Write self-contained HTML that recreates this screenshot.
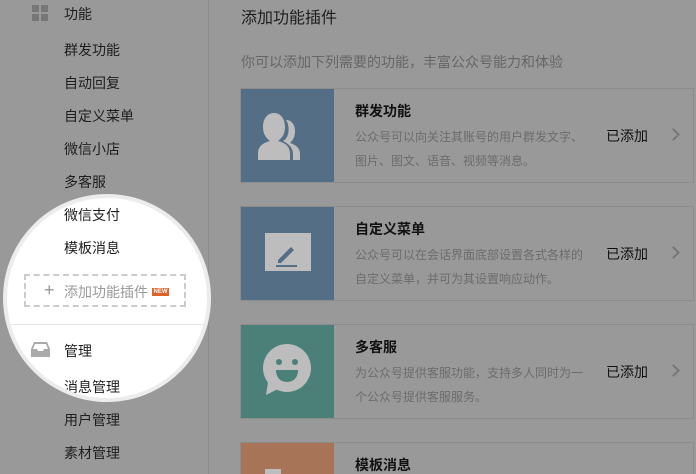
<!DOCTYPE html>
<html><head><meta charset="utf-8"><style>
*{margin:0;padding:0;box-sizing:border-box}
html{width:696px;height:474px;overflow:hidden}
body{width:696px;height:474px;overflow:hidden;background:#999;font-family:"Liberation Sans","Noto Sans CJK SC",sans-serif;position:relative;color:#1e1e1e}
.side{position:absolute;left:0;top:0;width:209px;height:474px;border-right:1px solid #8c8c8c;background:#999}
.it{position:absolute;left:64px;font-size:14px;line-height:20px;color:#1e1e1e}
.spot{position:absolute;left:3px;top:194px;width:208px;height:208px;border-radius:50%;background:#fff;border:4px solid #ececec;overflow:hidden}
.spot .in{position:absolute;left:-7px;top:-198px;width:209px;height:474px}
.title{position:absolute;left:241px;top:4px;font-size:16px;color:#1e1e1e}
.sub{position:absolute;left:241px;top:52px;font-size:14px;color:#666}
.card{position:absolute;left:240px;width:454px;height:95px;border:1px solid #8c8c8c;background:#999;overflow:hidden}
.card .ic{position:absolute;left:-1px;top:-1px;width:94px;height:95px}
.card h3{position:absolute;left:114px;top:12px;font-size:14px;font-weight:bold;color:#111}
.card p{position:absolute;left:114px;top:36px;font-size:12px;line-height:24px;color:#6c6c6c;width:230px}
.card .st{position:absolute;left:365px;top:37px;font-size:14px;color:#111}
.card .ar{position:absolute;left:428px;top:41px;width:9px;height:9px;border-right:2px solid #777;border-top:2px solid #777;transform:rotate(45deg)}
</style></head><body>
<div class="side">
 <div style="position:absolute;left:32px;top:5px;width:7px;height:7px;background:#777"></div>
 <div style="position:absolute;left:41px;top:5px;width:7px;height:7px;background:#777"></div>
 <div style="position:absolute;left:32px;top:14px;width:7px;height:7px;background:#777"></div>
 <div style="position:absolute;left:41px;top:14px;width:7px;height:7px;background:#777"></div>
 <div class="it" style="top:4px">功能</div>
 <div class="it" style="top:40px">群发功能</div>
 <div class="it" style="top:73px">自动回复</div>
 <div class="it" style="top:106px">自定义菜单</div>
 <div class="it" style="top:139px">微信小店</div>
 <div class="it" style="top:172px">多客服</div>
 <div class="it" style="top:377px">消息管理</div>
 <div class="it" style="top:410px">用户管理</div>
 <div class="it" style="top:443px">素材管理</div>
</div>
<div class="spot"><div class="in">
 <div class="it" style="top:205px">微信支付</div>
 <div class="it" style="top:238px">模板消息</div>
 <div style="position:absolute;left:24px;top:274px;width:162px;height:33px;border:2px dashed #ccc"></div>
 <div style="position:absolute;left:44px;top:281px;font-size:18px;color:#999;line-height:18px">+</div>
 <div style="position:absolute;left:64px;top:282px;font-size:14px;color:#999">添加功能插件</div>
 <div style="position:absolute;left:152px;top:288px;width:17px;height:8px;background:#e0602a;color:#fff;font-size:6px;line-height:8px;text-align:center;font-weight:bold">NEW</div>
 <div style="position:absolute;left:0;top:324px;width:209px;height:1px;background:#e6e6e6"></div>
 <svg style="position:absolute;left:31px;top:342px" width="19" height="15" viewBox="0 0 19 15"><path d="M3 0H16L19 7V15H0V7Z M2 7H6L7 9H12L13 7H17L15 2H4Z" fill="#aaa" fill-rule="evenodd"/></svg>
 <div class="it" style="top:341px">管理</div>
 <div class="it" style="top:377px">消息管理</div>
</div></div>
<div class="title">添加功能插件</div>
<div class="sub">你可以添加下列需要的功能，丰富公众号能力和体验</div>

<div class="card" style="top:88px"><div class="ic" style="background:#546e86">
 <svg width="94" height="95"><path d="M50 72V66C50 58 45 55 38 53C42 50 45 46 45 39C45 30 40 25 34 25S23 30 23 39C23 46 26 50 30 53C23 55 18 58 18 66V72Z" fill="#bdbdbd"/><path d="M53 72H60V66C60 60 56 57 50 55C53 52 55 49 55 43C55 36 51 32 46 32C49 36 49 42 48 46C47 50 45 52 43 53C49 56 53 60 53 66Z" fill="#bdbdbd"/></svg></div>
 <h3>群发功能</h3><p>公众号可以向关注其账号的用户群发文字、图片、图文、语音、视频等消息。</p><div class="st">已添加</div><div class="ar"></div></div>

<div class="card" style="top:206px"><div class="ic" style="background:#546e86">
 <svg width="94" height="95"><rect x="25" y="27" width="46" height="38" fill="#bdbdbd"/><path d="M38 54L51 41L54 44L41 57H38Z" fill="#546e86"/><rect x="36" y="59" width="21" height="2" fill="#546e86"/></svg></div>
 <h3>自定义菜单</h3><p>公众号可以在会话界面底部设置各式各样的自定义菜单，并可为其设置响应动作。</p><div class="st">已添加</div><div class="ar"></div></div>

<div class="card" style="top:324px"><div class="ic" style="background:#4a8078">
 <svg width="94" height="95"><circle cx="47" cy="44" r="24" fill="#bdbdbd"/><path d="M28 58L26 71L40 64Z" fill="#bdbdbd"/><circle cx="39" cy="38" r="3" fill="#4a8078"/><circle cx="55" cy="38" r="3" fill="#4a8078"/><path d="M36 46H58C58 54 53 58 47 58S36 54 36 46Z" fill="#4a8078"/></svg></div>
 <h3>多客服</h3><p>为公众号提供客服功能，支持多人同时为一个公众号提供客服服务。</p><div class="st">已添加</div><div class="ar"></div></div>

<div class="card" style="top:442px;height:32px;border-bottom:none"><div class="ic" style="background:#a87458;height:33px">
 <svg width="94" height="33"><rect x="25" y="27" width="16" height="6" fill="#bdbdbd"/></svg></div>
 <h3>模板消息</h3></div>
</body></html>
